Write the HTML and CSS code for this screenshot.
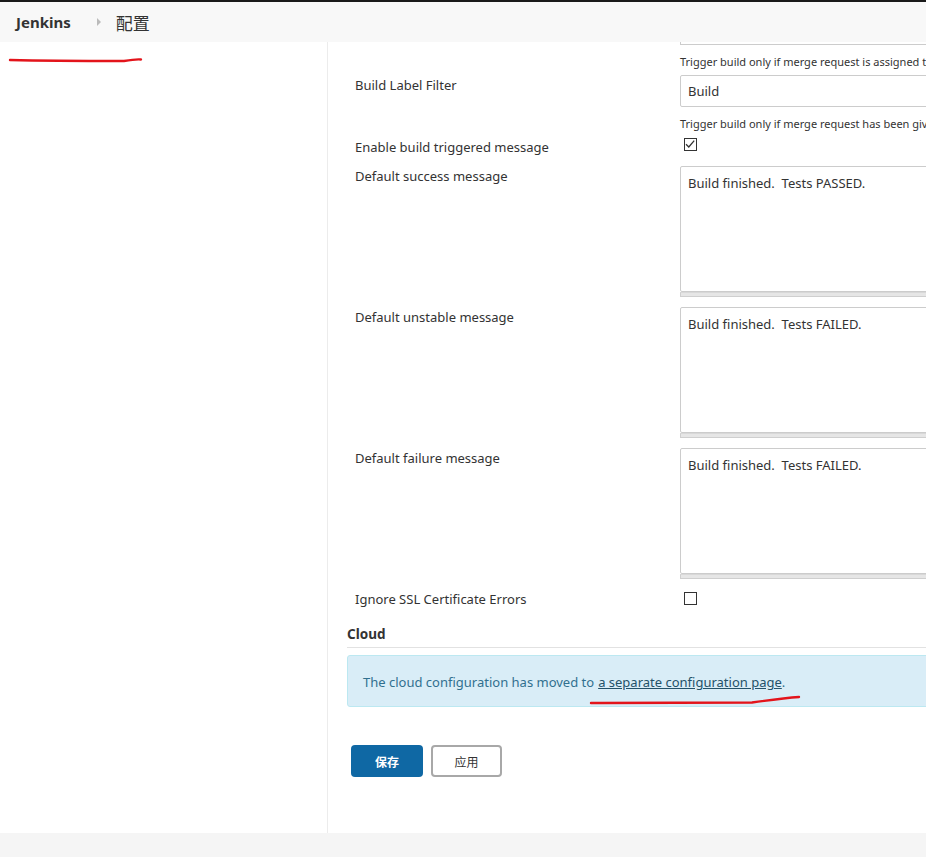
FILE: index.html
```html
<!DOCTYPE html>
<html>
<head>
<meta charset="utf-8">
<link rel="stylesheet" href="styles.css">
</head>
<body>
<header class="header">
  <span class="brand">Jenkins</span>
  <svg class="crumb-sep" width="6" height="8" viewBox="0 0 6 8"><path d="M1 0 L5 4 L1 8 Z" fill="#bbb"/></svg>
  <span class="crumb">配置</span>
</header>
<div class="page">
  <aside class="sidebar"></aside>
  <main class="main">
    <div class="form">
      <div class="stub"></div>
      <div class="hint first">Trigger build only if merge request is assigned to a label that matches the filter</div>
      <div class="row top">
        <label class="lbl">Build Label Filter</label>
        <div class="field"><input class="text" type="text" value="Build"></div>
      </div>
      <div class="hint second">Trigger build only if merge request has been given a label that matches the filter</div>
      <div class="row check-row">
        <label class="lbl">Enable build triggered message</label>
        <div class="field"><span class="cb checked"><svg width="12" height="12" viewBox="0 0 12 12"><path d="M2 6.2 L4.8 9 L10.2 2.6" fill="none" stroke="#333" stroke-width="1.3"/></svg></span></div>
      </div>
      <div class="row area-row">
        <label class="lbl">Default success message</label>
        <div class="field"><div class="area">Build finished.&nbsp; Tests PASSED.</div><div class="grip"></div></div>
      </div>
      <div class="row area-row">
        <label class="lbl">Default unstable message</label>
        <div class="field"><div class="area">Build finished.&nbsp; Tests FAILED.</div><div class="grip"></div></div>
      </div>
      <div class="row area-row">
        <label class="lbl">Default failure message</label>
        <div class="field"><div class="area">Build finished.&nbsp; Tests FAILED.</div><div class="grip"></div></div>
      </div>
      <div class="row ssl-row">
        <label class="lbl">Ignore SSL Certificate Errors</label>
        <div class="field"><span class="cb"></span></div>
      </div>
    </div>
    <section class="section">
      <h3 class="section-title">Cloud</h3>
      <div class="alert">The cloud configuration has moved to <a href="#" class="alert-link">a separate configuration page</a>.</div>
    </section>
    <div class="buttons">
      <button class="btn primary">保存</button>
      <button class="btn secondary">应用</button>
    </div>
  </main>
</div>
<footer class="footer"></footer>
<svg class="marks" width="926" height="857" viewBox="0 0 926 857">
  <path d="M10 60 C 50 61, 100 61, 124 61 C 130 60, 136 59, 141 59.5" fill="none" stroke="#e3141b" stroke-width="2.4" stroke-linecap="round"/>
  <path d="M591 703 C 650 703, 710 703, 752 702.5 C 770 700, 785 698, 799 697" fill="none" stroke="#e3141b" stroke-width="2.4" stroke-linecap="round"/>
</svg>
</body>
</html>
```
FILE: styles.css
```css
html, body {
  margin: 0;
  padding: 0;
}
body {
  width: 926px;
  height: 857px;
  overflow: hidden;
  position: relative;
  font-family: "Noto Sans", "Noto Sans CJK SC", sans-serif;
  color: #333;
  background: #fff;
  border-top: 2px solid #1a1a1a;
  box-sizing: border-box;
}
.header {
  height: 40px;
  background: #f8f8f8;
  display: flex;
  align-items: center;
  padding-left: 16px;
  box-sizing: border-box;
}
.brand {
  font-weight: 700;
  font-size: 15px;
  color: #333;
}
.crumb-sep {
  margin-left: 25px;
  margin-right: 14px;
}
.crumb {
  font-size: 17px;
  color: #333;
  font-family: "Noto Sans CJK SC", sans-serif;
}
.page {
  display: flex;
  height: 791px;
}
.sidebar {
  width: 327px;
  flex: none;
  border-right: 1px solid #ececec;
}
.main {
  flex: none;
  width: 700px;
  padding-left: 19px;
}
.form {
  padding-left: 8px;
}
.stub {
  margin-left: 325px;
  height: 2px;
  border: 1px solid #ccc;
  border-top: none;
}
.hint {
  margin-left: 325px;
  font-size: 11px;
  line-height: 14px;
  white-space: nowrap;
  color: #333;
}
.hint.first { margin-top: 10px; }
.hint.second { margin-top: 10px; }
.row {
  display: grid;
  grid-template-columns: 325px 1fr;
  align-items: start;
}
.row.top { margin-top: 6px; }
.lbl {
  font-size: 13px;
  line-height: 20px;
  white-space: nowrap;
}
.text {
  display: block;
  width: 400px;
  height: 32px;
  box-sizing: border-box;
  border: 1px solid #ccc;
  border-radius: 2px;
  padding: 0 7px;
  font: inherit;
  font-size: 13px;
  color: #333;
  outline: none;
}
.check-row {
  margin-top: 6px;
  height: 16px;
}
.cb {
  display: block;
  width: 13px;
  height: 13px;
  border: 1px solid #333;
  box-sizing: border-box;
  margin-left: 4px;
  margin-top: 1px;
  position: relative;
}
.cb svg {
  position: absolute;
  left: -1px;
  top: -1px;
}
.area-row {
  margin-top: 13px;
}
.area-row + .area-row { margin-top: 10px; }
.area {
  width: 400px;
  height: 126px;
  box-sizing: border-box;
  border: 1px solid #ccc;
  border-radius: 2px;
  padding: 6px 7px;
  font-size: 13px;
  line-height: 20px;
  white-space: pre;
}
.grip {
  width: 400px;
  height: 5px;
  box-sizing: border-box;
  background: #e6e6e6;
  border: 1px solid #cfcfcf;
  border-top: 1px solid #d8d8d8;
}
.ssl-row {
  margin-top: 12px;
}
.ssl-row .lbl { margin-top: -2px; }
.section {
  margin-top: 15px;
}
.section-title {
  margin: 0;
  font-size: 13.5px;
  font-weight: 700;
  line-height: 20px;
  padding-bottom: 3px;
  border-bottom: 1px solid #e2e2e2;
}
.alert {
  margin-top: 7px;
  height: 52px;
  box-sizing: border-box;
  background: #d9edf7;
  border: 1px solid #bce8f1;
  border-radius: 3px;
  color: #31708f;
  font-size: 13px;
  display: flex;
  align-items: center;
  padding-left: 15px;
  padding-top: 2px;
}
.alert-link {
  color: #245269;
  margin-left: 4px;
}
.buttons {
  display: flex;
  gap: 8px;
  margin-top: 38px;
  padding-left: 4px;
}
.btn {
  height: 32px;
  border-radius: 4px;
  font-family: "Noto Sans CJK SC", sans-serif;
  font-size: 12px;
  padding: 0;
  cursor: pointer;
}
.btn.primary {
  width: 72px;
  background: #0f68a4;
  color: #fff;
  border: none;
  font-weight: 700;
}
.btn.secondary {
  width: 71px;
  background: #fff;
  color: #333;
  border: 2px solid #a8a8a8;
}
.footer {
  height: 24px;
  background: #f5f5f5;
}
.marks {
  position: absolute;
  left: 0;
  top: -2px;
  pointer-events: none;
}
```
